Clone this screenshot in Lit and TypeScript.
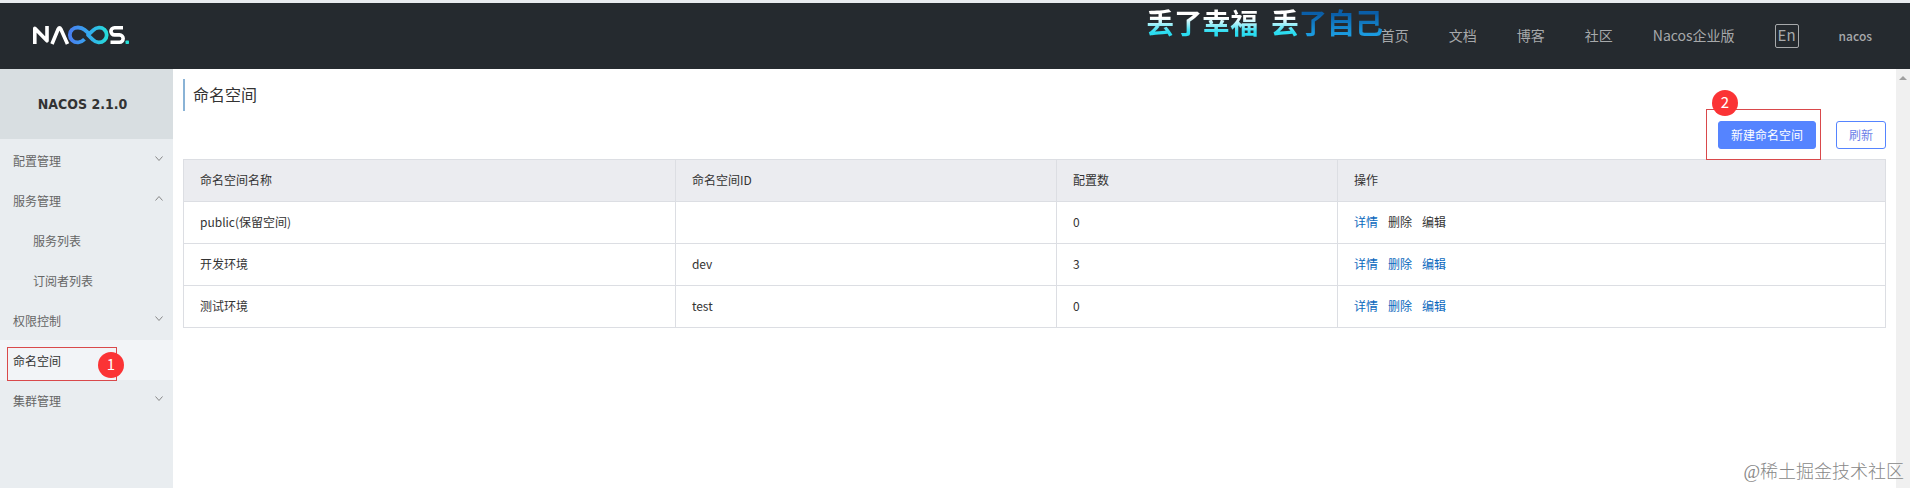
import { LitElement, html, css, svg, nothing } from "lit";
import { customElement, state } from "lit/decorators.js";

interface MenuItem {
  label: string;
  open?: boolean;
  leaf?: boolean;
  active?: boolean;
  children?: string[];
}

interface Namespace {
  name: string;
  id: string;
  count: number;
  locked?: boolean;
}

const MENU: MenuItem[] = [
  { label: "配置管理" },
  { label: "服务管理", open: true, children: ["服务列表", "订阅者列表"] },
  { label: "权限控制" },
  { label: "命名空间", leaf: true, active: true },
  { label: "集群管理" },
];

const NAMESPACES: Namespace[] = [
  { name: "public(保留空间)", id: "", count: 0, locked: true },
  { name: "开发环境", id: "dev", count: 3 },
  { name: "测试环境", id: "test", count: 0 },
];

@customElement("nacos-header")
export class NacosHeader extends LitElement {
  static styles = css`
    :host {
      display: block;
      border-top: 3px solid #e8ebef;
      background: #252a2f;
    }
    .bar {
      display: flex;
      align-items: center;
      height: 66px;
      padding: 0 38px 0 32px;
    }
    .logo {
      display: block;
      margin-bottom: 2px;
    }
    .nav {
      display: flex;
      align-items: center;
      gap: 40px;
      margin-left: auto;
    }
    .link {
      padding-bottom: 2px;
      color: #a7a9ab;
      font-size: 14px;
      line-height: 20px;
      text-decoration: none;
    }
    .user {
      padding-bottom: 0;
      font-size: 12px;
      font-weight: 500;
    }
    .lang {
      box-sizing: border-box;
      height: 24px;
      padding: 0 2px 2px;
      border: 1px solid #a7a9ab;
      border-radius: 2px;
      background: none;
      color: #a7a9ab;
      font: inherit;
      font-size: 15px;
      line-height: 20px;
    }
  `;

  render() {
    return html`
      <header class="bar">
        <a href="#" aria-label="Nacos">
          <svg class="logo" width="98" height="20" viewBox="0 0 98 20" fill="none">
            <defs>
              <linearGradient id="g" x1="37" y1="0" x2="76" y2="0" gradientUnits="userSpaceOnUse">
                <stop offset="0" stop-color="#4a7df0" />
                <stop offset="0.5" stop-color="#35a8ee" />
                <stop offset="1" stop-color="#25dfd8" />
              </linearGradient>
            </defs>
            ${svg`
              <g stroke="#fff" stroke-width="3.6" stroke-linejoin="round">
                <path d="M2.8 19V3.2L15 15.8V1" />
                <path d="M20 19L26.2 4Q27.5 1.5 28.8 4L35.5 19" />
                <path d="M91 2.8H82.500a3.300 3.300 0 0 0 0 7.100h5a3.600 3.600 0 0 1 0 7.300H78.500" />
              </g>
              <path
                d="M57.500 9L52.500 4.800C49 1.800 43 1.800 40.200 4.500a7.300 7.300 0 0 0 0 10.800C43.500 18.300 49 18 52.500 14.300"
                stroke="url(#g)" stroke-width="3.800" />
              <path
                d="M56 10L61 5.300C64.500 1.800 69.500 1.800 72.300 4.500a7.300 7.300 0 0 1 0 10.800C69 18.300 64 18 61 14.800Z"
                stroke="url(#g)" stroke-width="3.800" stroke-linejoin="round" />
              <rect x="93.500" y="15.500" width="3.500" height="3.500" rx="0.800" fill="#25dfd8" />
            `}
          </svg>
        </a>
        <nav class="nav">
          <a class="link" href="#">首页</a>
          <a class="link" href="#">文档</a>
          <a class="link" href="#">博客</a>
          <a class="link" href="#">社区</a>
          <a class="link" href="#">Nacos企业版</a>
          <button class="lang" type="button">En</button>
          <a class="link user" href="#">nacos</a>
        </nav>
      </header>
    `;
  }
}

@customElement("nacos-sidebar")
export class NacosSidebar extends LitElement {
  static styles = css`
    :host {
      display: block;
      background: #e9edf0;
    }
    .version {
      height: 70px;
      margin: 0 0 1px;
      padding-right: 8px;
      background: #d8dee1;
      color: #333;
      font-family: "DejaVu Sans Condensed", "Noto Sans", sans-serif;
      font-size: 14px;
      font-weight: 700;
      line-height: 70px;
      text-align: center;
    }
    .list {
      margin: 0;
      padding: 0;
      list-style: none;
    }
    .item {
      display: flex;
      align-items: center;
      justify-content: space-between;
      box-sizing: border-box;
      width: 100%;
      height: 40px;
      padding: 2px 10px 0 13px;
      border: 0;
      background: none;
      color: #666;
      font: inherit;
      font-size: 12px;
      line-height: 20px;
      text-decoration: none;
    }
    .sub {
      padding-left: 33px;
    }
    .active {
      background: #f2f4f7;
      color: #333;
    }
    .arrow {
      margin-bottom: 4px;
    }
    .entry {
      position: relative;
    }
    .callout {
      position: absolute;
      top: 7px;
      left: 7px;
      box-sizing: border-box;
      width: 110px;
      height: 34px;
      border: 1px solid #d9494b;
      pointer-events: none;
    }
    .badge {
      position: absolute;
      top: 4px;
      right: -8px;
      width: 26px;
      height: 26px;
      border-radius: 50%;
      background: #fb3335;
      color: #fff;
      font-size: 15px;
      line-height: 24px;
      text-align: center;
    }
  `;

  private renderItem(item: MenuItem) {
    if (item.leaf) {
      return html`<li class="entry">
        <a class="item ${item.active ? "active" : ""}" href="#" aria-current="page">${item.label}</a>
        <div class="callout"><span class="badge">1</span></div>
      </li>`;
    }
    return html`<li>
      <button class="item" type="button" aria-expanded=${item.open ? "true" : "false"}>
        ${item.label}
        <svg class="arrow" width="8" height="8" viewBox="0 0 8 8" fill="none" stroke="#888" overflow="visible">
          <path d=${item.open ? "M0.5 5.5L4 1.5L7.5 5.5" : "M0.5 1.5L4 5.5L7.5 1.5"} />
        </svg>
      </button>
      ${item.children
        ? html`<ul class="list">
            ${item.children.map((c) => html`<li><a class="item sub" href="#">${c}</a></li>`)}
          </ul>`
        : nothing}
    </li>`;
  }

  render() {
    return html`
      <h2 class="version">NACOS 2.1.0</h2>
      <nav><ul class="list">${MENU.map((m) => this.renderItem(m))}</ul></nav>
    `;
  }
}

@customElement("namespace-page")
export class NamespacePage extends LitElement {
  static styles = css`
    :host {
      display: block;
      padding: 10px;
    }
    .title {
      box-sizing: border-box;
      height: 32px;
      margin: 0 0 10px;
      padding-left: 8px;
      border-left: 2px solid #8ab3d6;
      color: #333;
      font-size: 16px;
      font-weight: 400;
      line-height: 30px;
    }
    .actions {
      display: flex;
      justify-content: flex-end;
      gap: 20px;
      margin-bottom: 10px;
    }
    .btn {
      box-sizing: border-box;
      height: 28px;
      padding: 0 12px;
      border: 1px solid #5584ff;
      border-radius: 3px;
      background: #fff;
      color: #6b7fe8;
      font: inherit;
      font-size: 12px;
      line-height: 24px;
    }
    .primary {
      background: #5584ff;
      color: #fff;
    }
    .marked {
      position: relative;
      display: flex;
    }
    .callout {
      position: absolute;
      inset: -12px -5px -11px -12px;
      border: 1px solid #d9494b;
      pointer-events: none;
    }
    .badge {
      position: absolute;
      top: -20px;
      left: 5px;
      width: 26px;
      height: 26px;
      border-radius: 50%;
      background: #fb3335;
      color: #fff;
      font-size: 15px;
      line-height: 24px;
      text-align: center;
    }
    .table {
      width: 100%;
      border-collapse: collapse;
      table-layout: fixed;
      color: #333;
      font-size: 12px;
      line-height: 20px;
    }
    .cell {
      box-sizing: border-box;
      height: 42px;
      padding: 0 16px 1px;
      border: 1px solid #dcdee3;
      font-weight: 400;
      text-align: left;
    }
    .head {
      background: #ebecf0;
    }
    .name {
      width: 28.9%;
    }
    .id {
      width: 22.4%;
    }
    .count {
      width: 16.5%;
    }
    .ops {
      display: flex;
      gap: 10px;
    }
    .op {
      color: #0a68bd;
      text-decoration: none;
    }
    .off {
      color: #333;
    }
  `;

  @state() private rows = NAMESPACES;

  render() {
    return html`
      <h1 class="title">命名空间</h1>
      <div class="actions">
        <div class="marked">
          <button class="btn primary" type="button">新建命名空间</button>
          <div class="callout"><span class="badge">2</span></div>
        </div>
        <button class="btn" type="button">刷新</button>
      </div>
      <table class="table">
        <thead>
          <tr>
            <th class="cell head name" scope="col">命名空间名称</th>
            <th class="cell head id" scope="col">命名空间ID</th>
            <th class="cell head count" scope="col">配置数</th>
            <th class="cell head" scope="col">操作</th>
          </tr>
        </thead>
        <tbody>
          ${this.rows.map(
            (r) => html`<tr>
              <td class="cell">${r.name}</td>
              <td class="cell">${r.id}</td>
              <td class="cell">${r.count}</td>
              <td class="cell">
                <div class="ops">
                  <a class="op" href="#">详情</a>
                  <a class="op ${r.locked ? "off" : ""}" href="#">删除</a>
                  <a class="op ${r.locked ? "off" : ""}" href="#">编辑</a>
                </div>
              </td>
            </tr>`,
          )}
        </tbody>
      </table>
    `;
  }
}

@customElement("app-root")
export class AppRoot extends LitElement {
  static styles = css`
    :host {
      position: relative;
      display: flex;
      flex-direction: column;
      min-height: 100vh;
      background: #fff;
      font-family: "Noto Sans CJK SC", "Noto Sans", sans-serif;
    }
    .body {
      display: grid;
      grid-template-columns: 173px 1fr 14px;
      flex: 1;
    }
    .track {
      display: flex;
      justify-content: center;
      padding-top: 7px;
      background: #f0f0f0;
    }
    .lyric {
      position: absolute;
      top: 2px;
      right: 527px;
      margin: 0;
      font-size: 28px;
      font-weight: 700;
      line-height: 40px;
      white-space: pre;
    }
    .sung,
    .rest {
      background: linear-gradient(#fff 40%, #2bdcf0 75%);
      background-clip: text;
      -webkit-background-clip: text;
      color: transparent;
    }
    .rest {
      background-image: linear-gradient(#0a5ea8 30%, #1b9be0 80%);
    }
    .watermark {
      position: absolute;
      right: 6px;
      bottom: 4px;
      color: #888;
      font-family: "Liberation Serif", "Noto Sans CJK SC", serif;
      font-size: 18px;
      font-weight: 300;
      line-height: 24px;
    }
  `;

  render() {
    return html`
      <nacos-header></nacos-header>
      <div class="body">
        <nacos-sidebar></nacos-sidebar>
        <namespace-page></namespace-page>
        <div class="track">
          <svg width="8" height="4" viewBox="0 0 8 4"><path d="M0 4L4 0L8 4Z" fill="#a0a0a0" /></svg>
        </div>
      </div>
      <p class="lyric"><span class="sung">丢了幸福  丢</span><span class="rest">了自己</span></p>
      <span class="watermark">@稀土掘金技术社区</span>
    `;
  }
}
